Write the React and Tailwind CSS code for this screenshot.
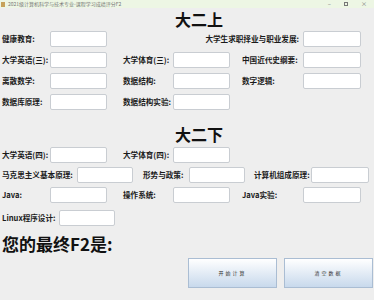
import React from "react";

const F = { fontFamily: '"Noto Sans CJK SC", "Noto Sans", sans-serif' };

function Label({ children, w, right }) {
  return (
    <div
      className={`flex h-full shrink-0 items-center whitespace-nowrap text-[7.6px] font-bold text-[#1a1a1a] ${right ? "justify-end pr-[4px]" : ""}`}
      style={{ width: w }}
    >
      {children}
    </div>
  );
}

function Box({ w }) {
  return (
    <div
      className="h-[16px] shrink-0 rounded-[2px] border border-[#c9cdd2] bg-white"
      style={{ width: w }}
    />
  );
}

function Row({ children, className = "" }) {
  return <div className={`flex h-[16px] items-center ${className}`}>{children}</div>;
}

export default function App() {
  return (
    <div className="h-[300px] w-[374px] overflow-hidden bg-[#eeeeee]" style={F}>
      {/* title bar */}
      <div className="flex h-[8px] items-center bg-[#edf6e4] text-[#777]">
        <div className="ml-[1px] h-[5px] w-[4px] bg-[#c7a25a]" />
        <div className="ml-[3px] whitespace-nowrap text-[5px] leading-[8px]">
          2021级计算机科学与技术专业-课程学习成绩评分F2
        </div>
        <div className="ml-auto flex items-center gap-[13px] pr-[7px] text-[6px] leading-[8px]">
          <span>–</span>
          <span className="inline-block h-[4px] w-[4px] border border-[#777]" />
          <span>×</span>
        </div>
      </div>

      <div className="ml-[175px] mt-[1px] h-[20px] text-[16px] font-bold leading-[20px] text-[#111]">
        大二上
      </div>

      <div className="ml-[2px] mt-[2px] flex flex-col gap-[5px]">
        <Row>
          <Label w={48}>健康教育:</Label>
          <Box w={57} />
          <div className="flex h-full flex-1 items-center justify-end">
            <Label right w={140}>大学生求职择业与职业发展:</Label>
          </div>
          <Box w={58} />
          <div className="w-[13px]" />
        </Row>
        <Row>
          <Label w={48}>大学英语(三):</Label>
          <Box w={57} />
          <div className="w-[16px]" />
          <Label w={50}>大学体育(三):</Label>
          <Box w={57} />
          <div className="w-[12px]" />
          <Label w={61}>中国近代史纲要:</Label>
          <Box w={58} />
        </Row>
        <Row>
          <Label w={48}>离散数学:</Label>
          <Box w={57} />
          <div className="w-[16px]" />
          <Label w={50}>数据结构:</Label>
          <Box w={57} />
          <div className="w-[12px]" />
          <Label w={61}>数字逻辑:</Label>
          <Box w={58} />
        </Row>
        <Row>
          <Label w={48}>数据库原理:</Label>
          <Box w={57} />
          <div className="w-[16px]" />
          <Label w={50}>数据结构实验:</Label>
          <Box w={57} />
        </Row>
      </div>

      <div className="ml-[175px] mt-[14px] h-[20px] text-[16px] font-bold leading-[20px] text-[#111]">
        大二下
      </div>

      <div className="ml-[2px] mt-[3px] flex flex-col gap-[4px]">
        <Row>
          <Label w={48}>大学英语(四):</Label>
          <Box w={57} />
          <div className="w-[16px]" />
          <Label w={50}>大学体育(四):</Label>
          <Box w={57} />
        </Row>
        <Row>
          <Label w={75}>马克思主义基本原理:</Label>
          <Box w={56} />
          <div className="w-[10px]" />
          <Label w={46}>形势与政策:</Label>
          <Box w={56} />
          <div className="w-[9px]" />
          <Label w={57}>计算机组成原理:</Label>
          <Box w={58} />
        </Row>
        <Row>
          <Label w={48}>Java:</Label>
          <Box w={57} />
          <div className="w-[16px]" />
          <Label w={50}>操作系统:</Label>
          <Box w={57} />
          <div className="w-[12px]" />
          <Label w={61}>Java实验:</Label>
          <Box w={58} />
        </Row>
        <Row className="mt-[3px]">
          <Label w={57}>Linux程序设计:</Label>
          <Box w={56} />
        </Row>
      </div>

      <div className="ml-[2px] mt-[7px] h-[22px] text-[17px] font-bold leading-[22px] text-[#111]">
        您的最终F2是:
      </div>

      <div className="ml-[188px] mt-[3px] flex gap-[7px]">
        <div className="flex h-[30px] w-[89px] items-center justify-center border border-[#aabdd3] bg-gradient-to-b from-white to-[#c8d9ec] text-[5px] tracking-[2px] text-[#333]">
          开始计算
        </div>
        <div className="flex h-[30px] w-[89px] items-center justify-center border border-[#aabdd3] bg-gradient-to-b from-white to-[#c8d9ec] text-[5px] tracking-[2px] text-[#333]">
          清空数据
        </div>
      </div>
    </div>
  );
}
